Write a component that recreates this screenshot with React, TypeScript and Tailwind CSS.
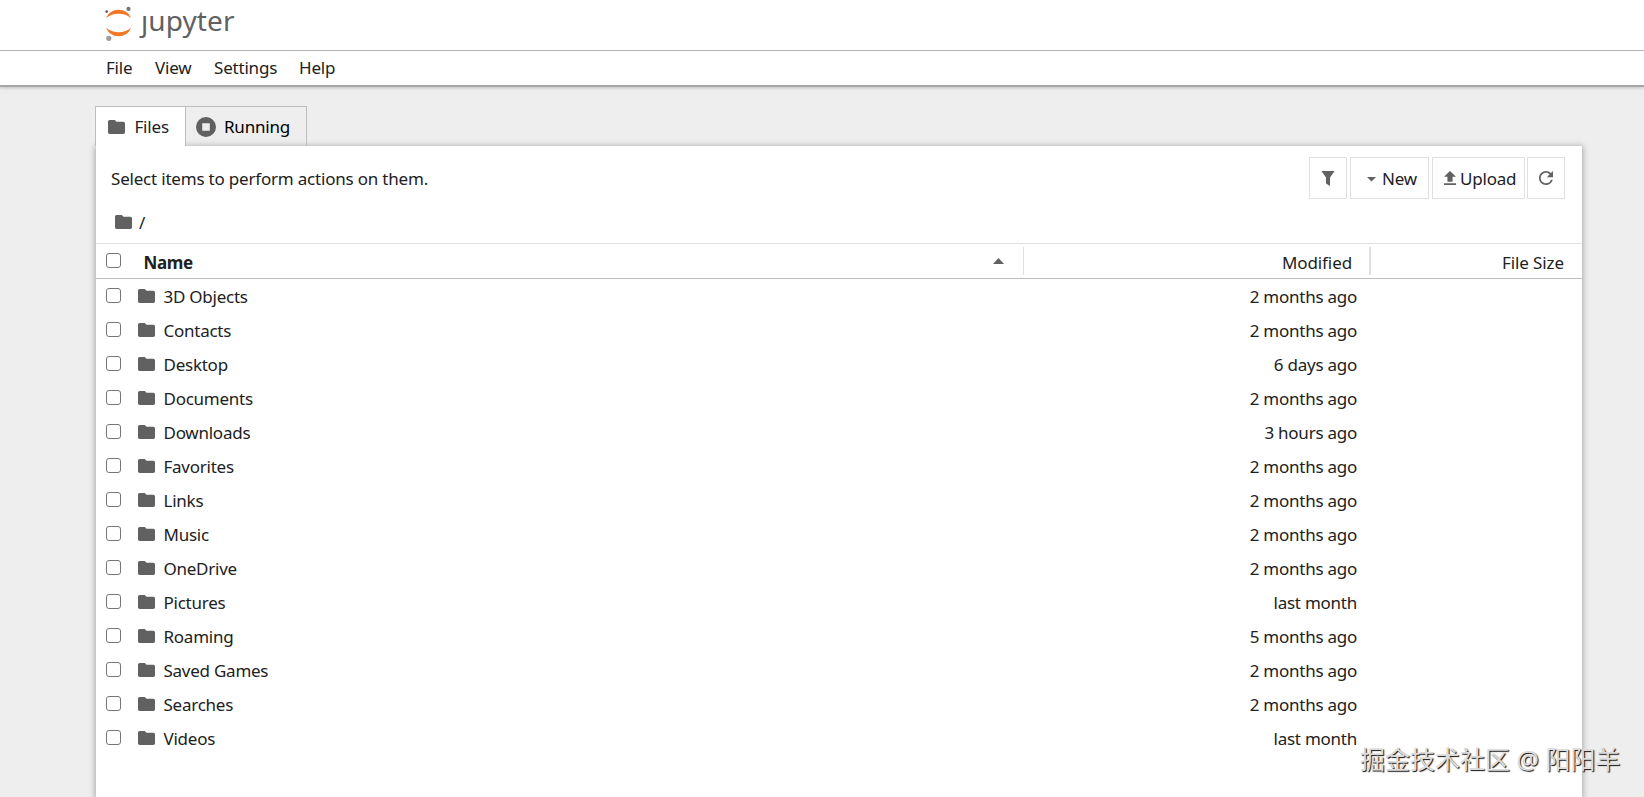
import { useState } from "react";
import type { ReactNode } from "react";

interface Entry {
  name: string;
  modified: string;
}

const ENTRIES: Entry[] = [
  { name: "3D Objects", modified: "2 months ago" },
  { name: "Contacts", modified: "2 months ago" },
  { name: "Desktop", modified: "6 days ago" },
  { name: "Documents", modified: "2 months ago" },
  { name: "Downloads", modified: "3 hours ago" },
  { name: "Favorites", modified: "2 months ago" },
  { name: "Links", modified: "2 months ago" },
  { name: "Music", modified: "2 months ago" },
  { name: "OneDrive", modified: "2 months ago" },
  { name: "Pictures", modified: "last month" },
  { name: "Roaming", modified: "5 months ago" },
  { name: "Saved Games", modified: "2 months ago" },
  { name: "Searches", modified: "2 months ago" },
  { name: "Videos", modified: "last month" },
];

function FolderIcon() {
  return (
    <svg viewBox="2 4 20 16" className="h-[14px] w-[17px] shrink-0 fill-[#616161]" preserveAspectRatio="none">
      <path d="M10 4H4c-1.1 0-2 .9-2 2v12c0 1.1.9 2 2 2h16c1.1 0 2-.9 2-2V8c0-1.1-.9-2-2-2h-8l-2-2z" />
    </svg>
  );
}

function Logo() {
  return (
    <div className="flex items-start">
      <svg viewBox="0 0 28 36" className="mt-[5px] h-9 w-7">
        <path d="M1.2 13.2C3.2 7.6 8 4.7 13.6 4.7s10.400 2.900 12.400 8.500C22.800 10.200 18.400 8.800 13.600 8.800S4.400 10.200 1.200 13.200z" fill="#f37726" />
        <path d="M1.200 22.800C3.200 28.400 8 31.300 13.600 31.300s10.400-2.900 12.400-8.500c-3.200 3-7.600 4.400-12.400 4.400S4.400 25.800 1.200 22.800z" fill="#f37726" />
        <circle cx="23.500" cy="3.900" r="2.100" fill="#767677" />
        <circle cx="1.700" cy="6.600" r="1.400" fill="#616262" />
        <circle cx="3.800" cy="33.300" r="2.600" fill="#9e9e9e" />
      </svg>
      <div className="ml-[8px] flex h-[44px] text-[28px] leading-[40px] tracking-[0.1px] text-[#616161]">
        {/* the wordmark has no dot over its j */}
        <span className="block [clip-path:inset(13px_-4px_0_-8px)]">j</span>
        <span>upyter</span>
      </div>
    </div>
  );
}

function Checkbox({ checked, onChange }: { checked: boolean; onChange: () => void }) {
  return (
    <input
      type="checkbox"
      checked={checked}
      onChange={onChange}
      className="block h-[15px] w-[15px] shrink-0 appearance-none rounded-[3px] border border-[#767676] bg-white checked:bg-[#1976d2]"
    />
  );
}

function ToolButton({ className, children }: { className: string; children: ReactNode }) {
  return (
    <button className={`flex h-[42px] items-center border border-[#e0e0e0] bg-white ${className}`}>
      {children}
    </button>
  );
}

export default function App() {
  const [selected, setSelected] = useState<string[]>([]);

  function toggle(name: string) {
    setSelected((prev) => (prev.includes(name) ? prev.filter((n) => n !== name) : [...prev, name]));
  }

  function toggleAll() {
    setSelected((prev) => (prev.length === ENTRIES.length ? [] : ENTRIES.map((e) => e.name)));
  }

  return (
    <div className="relative flex h-[797px] w-full flex-col overflow-hidden bg-[#eee] font-['Noto_Sans','Noto_Sans_CJK_SC',sans-serif] text-[17px] leading-6 tracking-[-0.2px] text-[#212121]">
      <header className="h-[51px] shrink-0 border-b border-[#bdbdbd] bg-white pl-[105px]">
        <Logo />
      </header>
      <nav className="flex h-[36px] shrink-0 items-center border-b-2 border-[#a6a8a7] bg-white pl-[106px] shadow-[0_1px_3px_rgba(0,0,0,0.2)]">
        <span className="w-[49px]">File</span>
        <span className="w-[59px]">View</span>
        <span className="w-[85px]">Settings</span>
        <span>Help</span>
      </nav>

      <main className="flex min-h-0 flex-1 flex-col pr-[62px] pl-[95px] pt-[19px]">
        <div className="z-10 flex h-10 shrink-0">
          <div className="flex w-[91px] items-center border-t border-x border-[#bdbdbd] bg-white pl-[11.500px]">
            <FolderIcon />
            <span className="ml-[10px]">Files</span>
          </div>
          <div className="flex w-[121px] items-center border-t border-r border-[#bdbdbd] pl-[10px] text-black">
            <svg viewBox="0 0 20 20" className="h-5 w-5">
              <path fillRule="evenodd" d="M10 0a10 10 0 1 1 0 20a10 10 0 0 1 0-20zM6.200 6.200v7.600h7.600V6.200z" fill="#616161" />
            </svg>
            <span className="ml-[8px]">Running</span>
          </div>
        </div>

        <section className="ml-px flex min-h-0 flex-1 flex-col bg-white shadow-[0_1px_6px_1px_rgba(0,0,0,0.3)]">
          <div className="flex h-[64px] shrink-0 items-start pt-[11px] pr-[17px] pl-[15px]">
            <p className="mt-[10px] flex-1">Select items to perform actions on them.</p>
            <ToolButton className="w-[38px] justify-center">
              <svg viewBox="0 0 14 15" className="h-[15px] w-[14px] fill-[#616161]">
                <path d="M.4 0h13.200L9 6.600V15l-4-2.600V6.600z" />
              </svg>
            </ToolButton>
            <ToolButton className="ml-[3px] w-[79px] pl-[16px]">
              <svg viewBox="0 0 9 5" className="mt-[2px] mr-[6px] h-[5px] w-[9px] fill-[#616161]">
                <path d="M0 0h9L4.500 4.500z" />
              </svg>
              <span className="mt-[2px]">New</span>
            </ToolButton>
            <ToolButton className="ml-[3px] w-[93px] pl-[11px]">
              <svg viewBox="5 3 14 17" className="mr-[4px] h-[14px] w-[12px] fill-[#616161]" preserveAspectRatio="none">
                <path d="M9 16h6v-6h4l-7-7-7 7h4zm-4 2h14v2H5z" />
              </svg>
              <span className="mt-[2px]">Upload</span>
            </ToolButton>
            <ToolButton className="ml-[2px] w-[38px] justify-center">
              <svg viewBox="4 4 16 16" className="h-[14px] w-[14px] fill-[#616161]">
                <path d="M17.650 6.350A7.958 7.958 0 0 0 12 4c-4.420 0-7.990 3.580-7.990 8s3.570 8 7.990 8c3.730 0 6.840-2.550 7.730-6h-2.080A5.990 5.990 0 0 1 12 18c-3.310 0-6-2.690-6-6s2.690-6 6-6c1.660 0 3.140.690 4.220 1.780L13 11h7V4z" />
              </svg>
            </ToolButton>
          </div>

          <div className="flex h-[33px] shrink-0 items-start pt-px pl-[19px]">
            <div className="mt-[4px]">
              <FolderIcon />
            </div>
            <span className="ml-[7px]">/</span>
          </div>

          <div className="flex h-[36px] shrink-0 border-t border-b border-t-[#e0e0e0] border-b-[#bdbdbd]">
            <div className="my-[3px] flex w-[928px] border-r border-[#e0e0e0] pl-[10px]">
              <div className="mt-[6px]">
                <Checkbox checked={selected.length === ENTRIES.length} onChange={toggleAll} />
              </div>
              <span className="mt-[4px] ml-[22.500px] flex-1 font-bold tracking-[-0.4px]">Name</span>
              <svg viewBox="0 0 11 6" className="mt-[11px] mr-[19px] h-[6px] w-[11px] fill-[#616161]">
                <path d="M0 6h11L5.500 0z" />
              </svg>
            </div>
            <div className="my-[3px] w-[347px] border-r-2 border-[#e0e0e0] pt-[4px] pr-[17px] text-right tracking-[-0.1px]">Modified</div>
            <div className="flex-1 pt-[7px] pr-[18px] text-right tracking-[-0.1px]">File Size</div>
          </div>

          <ul>
            {ENTRIES.map((entry) => (
              <li key={entry.name} className="flex h-[34px] items-start pl-[10px]">
                <div className="mt-[9px]">
                  <Checkbox checked={selected.includes(entry.name)} onChange={() => toggle(entry.name)} />
                </div>
                <span className="mt-[10px] ml-[16.500px]">
                  <FolderIcon />
                </span>
                <span className="mt-[6px] ml-[9px] flex-1 tracking-[-0.25px]">{entry.name}</span>
                <span className="mt-[6px] mr-[225px] tracking-[-0.25px]">{entry.modified}</span>
              </li>
            ))}
          </ul>
        </section>
      </main>

      <div className="absolute top-[741px] left-[1360px] z-20 text-[25px] leading-9 tracking-[0px] whitespace-nowrap text-[#dcdcdc] [text-shadow:1px_1px_1px_#111]">
        掘金技术社区 @ 阳阳羊
      </div>
    </div>
  );
}
